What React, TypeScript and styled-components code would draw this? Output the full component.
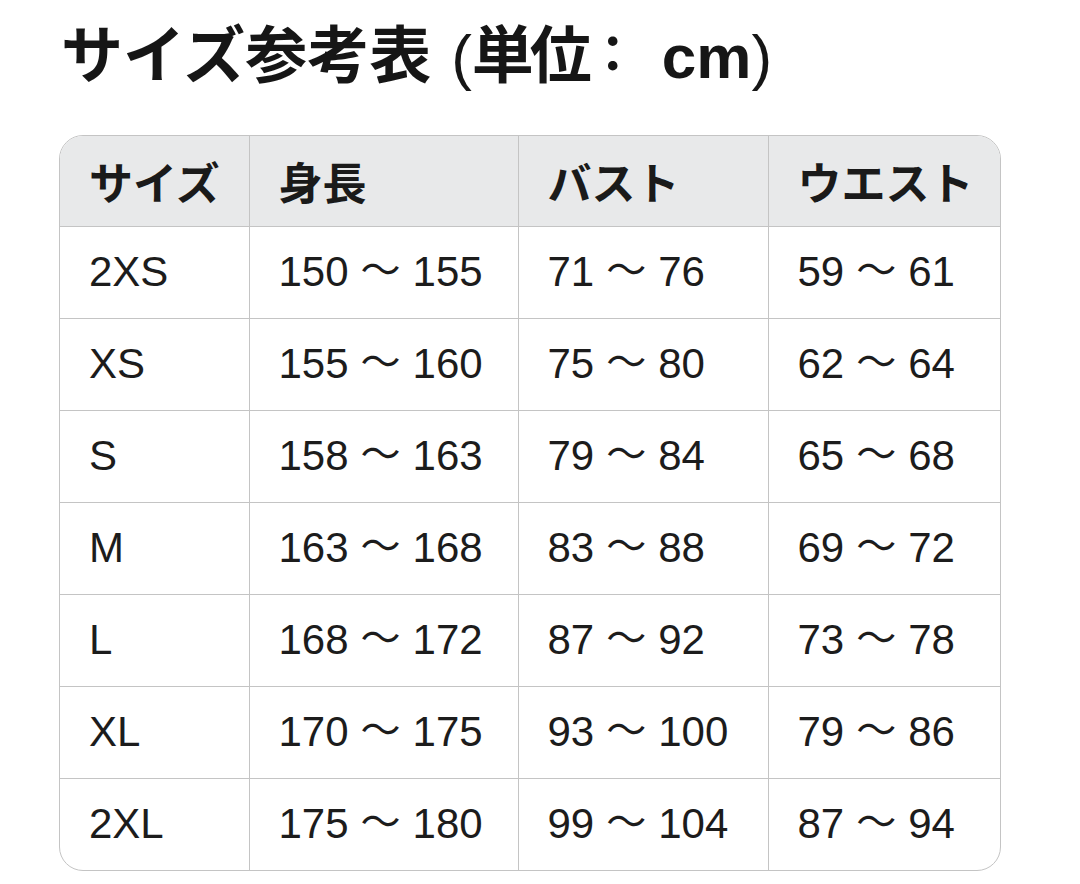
import styled, { createGlobalStyle } from 'styled-components'

const GlobalStyle = createGlobalStyle`
  html, body {
    margin: 0;
    padding: 0;
    background: #ffffff;
  }
  body {
    font-family: 'Liberation Sans', 'Noto Sans CJK JP', sans-serif;
    color: #1c1c1c;
  }
`

// [size, height, bust, waist] — each range as [from, to]
const rows: [string, number[], number[], number[]][] = [
  ['2XS', [150, 155], [71, 76], [59, 61]],
  ['XS', [155, 160], [75, 80], [62, 64]],
  ['S', [158, 163], [79, 84], [65, 68]],
  ['M', [163, 168], [83, 88], [69, 72]],
  ['L', [168, 172], [87, 92], [73, 78]],
  ['XL', [170, 175], [93, 100], [79, 86]],
  ['2XL', [175, 180], [99, 104], [87, 94]],
]

const headers = ['サイズ', '身長', 'バスト', 'ウエスト']
const widths = [189, 269, 250, 234]

function Range({ value }: { value: number[] }) {
  return (
    <>
      {value[0]}
      <Tilde>〜</Tilde>
      {value[1]}
    </>
  )
}

export default function App() {
  return (
    <Page>
      <GlobalStyle />
      <Title>
        サイズ参考表<Paren $side="open">(</Paren>
        <Unit>単位</Unit>
        <Colon>：</Colon>cm<Paren $side="close">)</Paren>
      </Title>
      <TableFrame>
        <Table>
          <colgroup>
            {widths.map((w, i) => (
              <col key={i} style={{ width: w }} />
            ))}
          </colgroup>
          <thead>
            <tr>
              {headers.map((h) => (
                <HeadCell key={h}>{h}</HeadCell>
              ))}
            </tr>
          </thead>
          <tbody>
            {rows.map(([size, height, bust, waist]) => (
              <tr key={size}>
                <Cell>{size}</Cell>
                <Cell>
                  <Range value={height} />
                </Cell>
                <Cell>
                  <Range value={bust} />
                </Cell>
                <Cell>
                  <Range value={waist} />
                </Cell>
              </tr>
            ))}
          </tbody>
        </Table>
      </TableFrame>
    </Page>
  )
}

const Page = styled.div`
  width: 1080px;
  height: 884px;
  padding: 17px 0 0 59px;
  box-sizing: border-box;
  overflow: hidden;
`

const Title = styled.h1`
  margin: 0 0 39px 2px;
  font-family: 'Liberation Sans', 'Noto Sans CJK JP', sans-serif;
  font-size: 62px;
  font-weight: 700;
  line-height: 78px;
  color: #161616;
  white-space: nowrap;
`

const Paren = styled.span<{ $side: 'open' | 'close' }>`
  font-family: 'Liberation Sans', sans-serif;
  font-weight: 400;
  margin: ${(p) => (p.$side === 'open' ? '0 0 0 20px' : '0')};
`

const Unit = styled.span`
  letter-spacing: -4px;
`

const Colon = styled.span`
  font-family: 'Noto Sans CJK JP', sans-serif;
  font-size: 50px;
  margin-right: 24px;
  position: relative;
  top: -6px;
`

const TableFrame = styled.div`
  width: 942px;
  border: 1.5px solid #c4c4c4;
  border-radius: 24px;
  overflow: hidden;
  box-sizing: border-box;
`

const Table = styled.table`
  width: 100%;
  border-collapse: collapse;
  table-layout: fixed;

  tr > *:last-child {
    border-right: none;
  }
  tbody tr:last-child > * {
    border-bottom: none;
  }
`

const HeadCell = styled.th`
  height: 90px;
  padding: 0 0 0 29px;
  text-align: left;
  background: #e8e9ea;
  border-right: 1.5px solid #c4c4c4;
  border-bottom: 1.5px solid #c4c4c4;
  font-family: 'Noto Sans CJK JP', sans-serif;
  font-size: 44px;
  font-weight: 700;
  line-height: 50px;
  color: #1a1a1a;
  box-sizing: border-box;
`

const Cell = styled.td`
  height: 92px;
  padding: 0 0 0 29px;
  text-align: left;
  border-right: 1.5px solid #c4c4c4;
  border-bottom: 1.5px solid #c4c4c4;
  font-family: 'Liberation Sans', sans-serif;
  font-size: 42px;
  font-weight: 400;
  line-height: 50px;
  color: #1c1c1c;
  white-space: nowrap;
  box-sizing: border-box;
`

const Tilde = styled.span`
  font-family: 'Noto Sans CJK JP', sans-serif;
  font-size: 40px;
  font-weight: 400;
  line-height: 0;
  margin: 0 12px;
  position: relative;
  top: -2px;
`
